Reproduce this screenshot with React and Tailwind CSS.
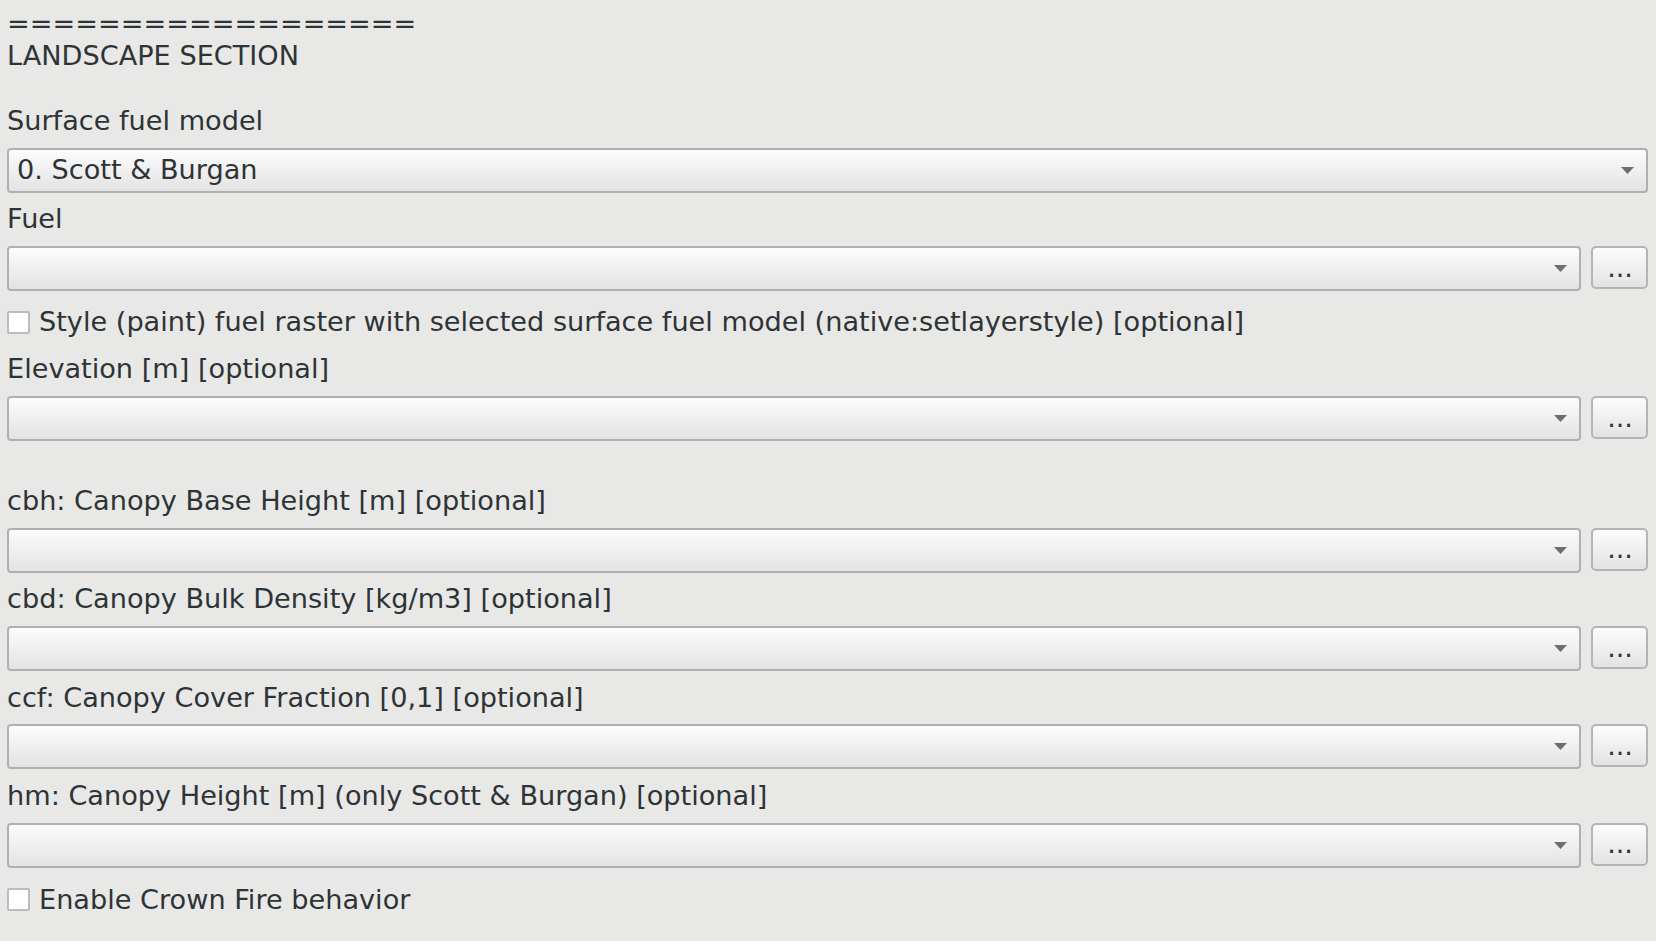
import React from 'react'

const font = { fontFamily: '"DejaVu Sans", Verdana, sans-serif' }

function Arrow() {
  return (
    <svg width="13" height="7" viewBox="0 0 13 7" className="shrink-0">
      <path d="M0 0 L13 0 L6.5 7 Z" fill="#6e6e6e" />
    </svg>
  )
}

function Combo({ value, className = '' }) {
  return (
    <div
      className={`h-[45px] flex items-center justify-between pl-[8px] pr-[12px] rounded-[4px] border-2 border-[#b0b0b0] bg-gradient-to-b from-[#fcfcfc] to-[#e3e3e3] ${className}`}
    >
      <span className="text-[27.15px] leading-[32px] text-[#2e3436] whitespace-nowrap">{value}</span>
      <Arrow />
    </div>
  )
}

function LayerRow({ className = '' }) {
  return (
    <div className={`flex items-start gap-[10px] ${className}`}>
      <Combo value="" className="flex-1" />
      <button className="w-[57px] h-[43px] rounded-[5px] border-2 border-[#b4b4b4] bg-gradient-to-b from-[#fcfcfc] to-[#e3e3e3] flex items-center justify-center text-[#2e3436] text-[27px] leading-[32px] pl-[1px]">
        ...
      </button>
    </div>
  )
}

function Label({ children, className = '' }) {
  return <div className={`h-[32px] text-[27.15px] leading-[32px] whitespace-nowrap ${className}`}>{children}</div>
}

function Check({ label, className = '' }) {
  return (
    <div className={`h-[32px] flex items-center gap-[9px] ${className}`}>
      <div className="w-[23px] h-[23px] bg-white border-2 border-[#bcbcbc] rounded-[2px] shrink-0" />
      <span className="text-[27.15px] leading-[32px] whitespace-nowrap">{label}</span>
    </div>
  )
}

export default function App() {
  return (
    <div className="w-[1656px] h-[941px] overflow-hidden bg-[#e8e8e7] text-[#2e3436]" style={font}>
      <div className="flex flex-col pl-[7px] pr-[8px] pt-2">
        <div className="text-[27.15px] leading-[32px]">
          <div>==================</div>
          <div>LANDSCAPE SECTION</div>
        </div>

        <Label className="mt-[33px]">Surface fuel model</Label>
        <Combo value="0. Scott & Burgan" className="mt-[10.5px]" />

        <Label className="mt-[10px]">Fuel</Label>
        <LayerRow className="mt-[11.5px]" />

        <Check
          className="mt-[15px]"
          label="Style (paint) fuel raster with selected surface fuel model (native:setlayerstyle) [optional]"
        />

        <Label className="mt-[15px]">Elevation [m] [optional]</Label>
        <LayerRow className="mt-[11px]" />

        <Label className="mt-[43.5px]">cbh: Canopy Base Height [m] [optional]</Label>
        <LayerRow className="mt-[11px]" />

        <Label className="mt-[10.5px]">cbd: Canopy Bulk Density [kg/m3] [optional]</Label>
        <LayerRow className="mt-[11px]" />

        <Label className="mt-[10.5px]">ccf: Canopy Cover Fraction [0,1] [optional]</Label>
        <LayerRow className="mt-[10.5px]" />

        <Label className="mt-[10.5px]">hm: Canopy Height [m] (only Scott &amp; Burgan) [optional]</Label>
        <LayerRow className="mt-[11px]" />

        <Check className="mt-[16px]" label="Enable Crown Fire behavior" />
      </div>
    </div>
  )
}
